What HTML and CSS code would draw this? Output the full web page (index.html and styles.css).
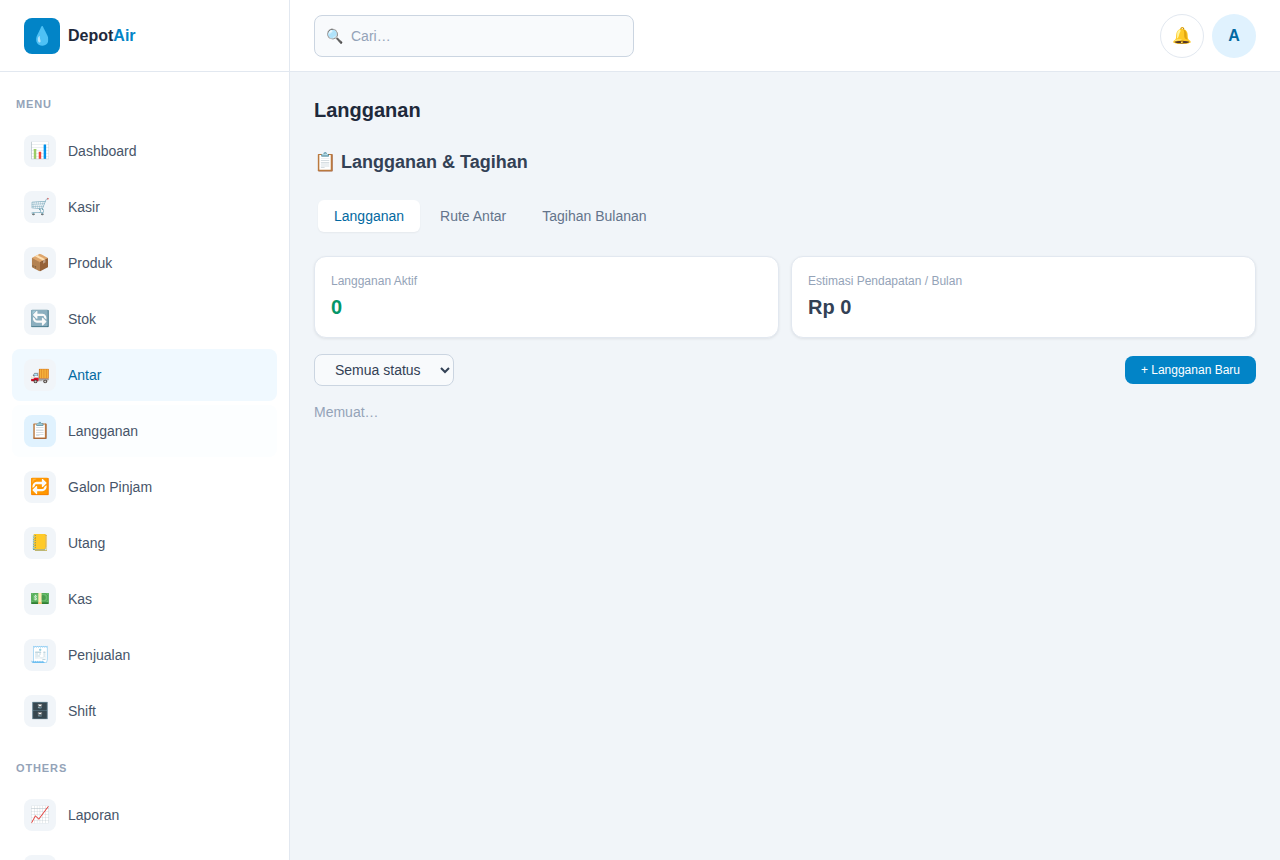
FILE: index.html
```html
<!DOCTYPE html>
<html lang="id">
<head>
  <meta charset="utf-8">
  <meta name="viewport" content="width=device-width, initial-scale=1">
  <title>DepotAir - Langganan</title>
  <link rel="stylesheet" href="styles.css">
</head>
<body>
<div class="app">

  <aside class="sidebar">
    <a class="brand" href="#">
      <span class="brand-icon">💧</span>
      <span>Depot<span class="brand-accent">Air</span></span>
    </a>
    <nav class="nav">
      <h2 class="nav-title">Menu</h2>
      <a class="nav-item" href="#dashboard"><span class="nav-icon">📊</span>Dashboard</a>
      <a class="nav-item" href="#kasir"><span class="nav-icon">🛒</span>Kasir</a>
      <a class="nav-item" href="#produk"><span class="nav-icon">📦</span>Produk</a>
      <a class="nav-item" href="#stok"><span class="nav-icon">🔄</span>Stok</a>
      <a class="nav-item highlight" href="#antar"><span class="nav-icon">🚚</span>Antar</a>
      <a class="nav-item current" href="#langganan"><span class="nav-icon">📋</span>Langganan</a>
      <a class="nav-item" href="#galon"><span class="nav-icon">🔁</span>Galon Pinjam</a>
      <a class="nav-item" href="#utang"><span class="nav-icon">📒</span>Utang</a>
      <a class="nav-item" href="#kas"><span class="nav-icon">💵</span>Kas</a>
      <a class="nav-item" href="#penjualan"><span class="nav-icon">🧾</span>Penjualan</a>
      <a class="nav-item" href="#shift"><span class="nav-icon">🗄️</span>Shift</a>

      <h2 class="nav-title">Others</h2>
      <a class="nav-item" href="#laporan"><span class="nav-icon">📈</span>Laporan</a>
      <a class="nav-item" href="#pengaturan"><span class="nav-icon">⚙️</span>Pengaturan</a>
    </nav>
  </aside>

  <div class="main">
    <header class="topbar">
      <label class="search">
        <span class="search-icon">🔍</span>
        <input type="search" placeholder="Cari…" aria-label="Cari">
      </label>
      <div class="topbar-actions">
        <button class="round-btn" type="button" aria-label="Notifikasi">🔔</button>
        <button class="round-btn avatar" type="button" aria-label="Akun">A</button>
      </div>
    </header>

    <main class="content">
      <h1 class="page-title">Langganan</h1>
      <h2 class="section-title">📋 Langganan &amp; Tagihan</h2>

      <div class="tabs">
        <button class="tab active" type="button">Langganan</button>
        <button class="tab" type="button">Rute Antar</button>
        <button class="tab" type="button">Tagihan Bulanan</button>
      </div>

      <div class="stats">
        <div class="card">
          <div class="card-label">Langganan Aktif</div>
          <div class="card-value green">0</div>
        </div>
        <div class="card">
          <div class="card-label">Estimasi Pendapatan / Bulan</div>
          <div class="card-value">Rp 0</div>
        </div>
      </div>

      <div class="toolbar">
        <select class="filter" aria-label="Status">
          <option>Semua status</option>
          <option>Aktif</option>
        </select>
        <button class="btn-primary" type="button">+ Langganan Baru</button>
      </div>

      <p class="loading">Memuat…</p>
    </main>
  </div>

</div>
</body>
</html>
```

FILE: styles.css
```css
* {
  box-sizing: border-box;
}

body {
  margin: 0;
  background: #f1f5f9;
  color: #1e293b;
  font-family: "Liberation Sans", Arial, sans-serif;
  font-size: 14px;
  line-height: 20px;
}

h1, h2, p {
  margin: 0;
}

a {
  color: inherit;
  text-decoration: none;
}

button, input, select {
  font: inherit;
}

button {
  cursor: pointer;
}

.app {
  display: flex;
  height: 100vh;
}

/* Sidebar */
.sidebar {
  display: flex;
  flex-direction: column;
  flex: none;
  width: 290px;
  background: #fff;
  border-right: 1px solid #e2e8f0;
}

.brand {
  display: flex;
  align-items: center;
  flex: none;
  gap: 8px;
  height: 72px;
  padding: 0 24px;
  border-bottom: 1px solid #e2e8f0;
  font-size: 16px;
  font-weight: bold;
}

.brand-icon {
  display: flex;
  align-items: center;
  justify-content: center;
  width: 36px;
  height: 36px;
  border-radius: 8px;
  background: #0284c7;
  font-size: 18px;
  font-weight: normal;
}

.brand-accent {
  color: #0284c7;
}

.nav {
  display: flex;
  flex-direction: column;
  flex: 1;
  gap: 4px;
  min-height: 0;
  padding: 24px 12px;
  overflow-y: auto;
  scrollbar-width: none;
}

.nav-title {
  padding: 0 4px;
  margin-bottom: 8px;
  color: #94a3b8;
  font-size: 11px;
  line-height: 17px;
  letter-spacing: 0.08em;
  text-transform: uppercase;
}

.nav-item + .nav-title {
  margin-top: 19px;
}

.nav-item {
  display: flex;
  align-items: center;
  flex: none;
  gap: 12px;
  height: 52px;
  padding: 0 12px;
  border-radius: 8px;
  color: #475569;
}

.nav-item:hover,
.nav-item.highlight {
  background: #f0f9ff;
  color: #0369a1;
}

.nav-item.current {
  background: #fcfeff;
}

.nav-icon {
  display: flex;
  align-items: center;
  justify-content: center;
  width: 32px;
  height: 32px;
  border-radius: 8px;
  background: #f1f5f9;
  font-size: 16px;
}

.current .nav-icon {
  background: #e0f2fe;
}

/* Top bar */
.main {
  display: flex;
  flex-direction: column;
  flex: 1;
  min-width: 0;
}

.topbar {
  display: flex;
  align-items: center;
  justify-content: space-between;
  flex: none;
  gap: 16px;
  height: 72px;
  padding: 0 24px;
  background: #fff;
  border-bottom: 1px solid #e2e8f0;
}

.search {
  display: flex;
  align-items: center;
  gap: 8px;
  width: 320px;
  height: 42px;
  padding: 0 11px;
  border: 1px solid #cbd5e1;
  border-radius: 8px;
  background: #f8fafc;
}

.search input {
  flex: 1;
  min-width: 0;
  padding: 0;
  border: none;
  outline: none;
  background: none;
  color: #1e293b;
}

.search input::placeholder {
  color: #94a3b8;
}

.topbar-actions {
  display: flex;
  gap: 8px;
}

.round-btn {
  width: 44px;
  height: 44px;
  padding: 0;
  border: 1px solid #e2e8f0;
  border-radius: 50%;
  background: #fff;
  font-size: 16px;
}

.avatar {
  border: none;
  background: #e0f2fe;
  color: #0369a1;
  font-weight: bold;
}

/* Content */
.content {
  flex: 1;
  padding: 24px;
  overflow-y: auto;
}

.page-title {
  margin-bottom: 24px;
  font-size: 20px;
  line-height: 28px;
}

.section-title {
  margin-bottom: 20px;
  color: #334155;
  font-size: 18px;
  line-height: 28px;
}

.tabs {
  display: flex;
  gap: 4px;
  width: fit-content;
  padding: 4px;
  margin-bottom: 20px;
  border-radius: 8px;
  background: #f1f5f9;
}

.tab {
  padding: 6px 16px;
  border: none;
  border-radius: 6px;
  background: none;
  color: #64748b;
}

.tab.active {
  background: #fff;
  color: #0369a1;
  box-shadow: 0 1px 2px rgba(0, 0, 0, 0.05);
}

.stats {
  display: grid;
  grid-template-columns: 1fr 1fr;
  gap: 12px;
  margin-bottom: 16px;
}

.card {
  padding: 16px;
  border: 1px solid #e2e8f0;
  border-radius: 12px;
  background: #fff;
  box-shadow: 0 1px 3px rgba(0, 0, 0, 0.08);
}

.card-label {
  margin-bottom: 4px;
  color: #94a3b8;
  font-size: 12px;
  line-height: 16px;
}

.card-value {
  color: #334155;
  font-size: 20px;
  font-weight: bold;
  line-height: 28px;
}

.card-value.green {
  color: #059669;
}

.toolbar {
  display: flex;
  align-items: center;
  justify-content: space-between;
  margin-bottom: 16px;
}

.filter {
  width: 140px;
  height: 32px;
  padding: 0 16px;
  border: 1px solid #cbd5e1;
  border-radius: 8px;
  background: #f8fafc;
  color: #334155;
}

.btn-primary {
  padding: 6px 16px;
  border: none;
  border-radius: 8px;
  background: #0284c7;
  color: #fff;
  font-size: 12px;
  line-height: 16px;
}

.loading {
  color: #94a3b8;
}
```
